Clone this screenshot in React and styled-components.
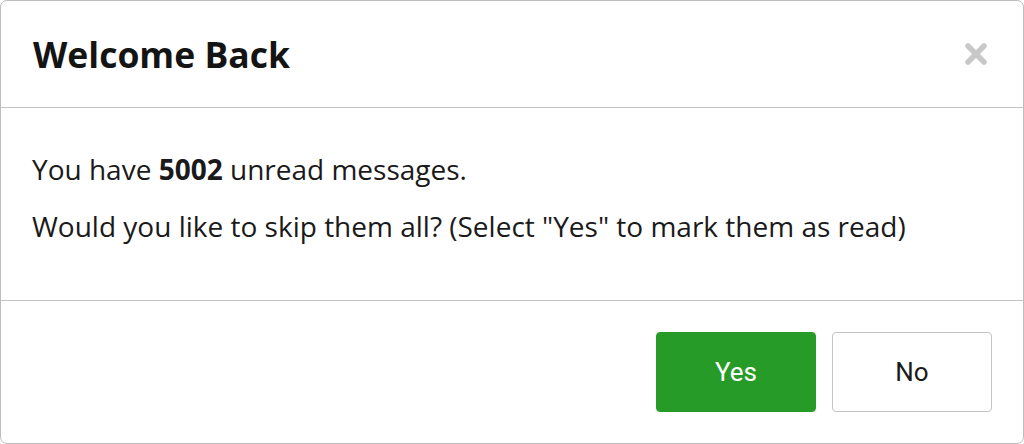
import React from 'react';
import styled, { createGlobalStyle } from 'styled-components';

const GlobalStyle = createGlobalStyle`
  html, body {
    margin: 0;
    padding: 0;
    background: #fff;
  }
  body {
    font-family: "Open Sans", Lato, sans-serif;
    color: #1a1a1a;
  }
`;

const Dialog = styled.div`
  box-sizing: border-box;
  width: 1024px;
  height: 444px;
  border: 1px solid #bdbdbd;
  border-radius: 7px;
  background: #fff;
  display: flex;
  flex-direction: column;
`;

const Header = styled.div`
  height: 106px;
  display: flex;
  align-items: center;
  justify-content: space-between;
  padding: 0 35px 0 32px;
  border-bottom: 1px solid #c4c4c4;
`;

const Title = styled.h2`
  margin: 0;
  font-size: 35.5px;
  font-weight: 700;
  color: #141414;
`;

const CloseButton = styled.button`
  background: none;
  border: none;
  padding: 0;
  cursor: pointer;
  display: flex;
  svg {
    width: 24px;
    height: 24px;
  }
`;

const Body = styled.div`
  box-sizing: border-box;
  height: 193px;
  border-bottom: 1px solid #c4c4c4;
  padding: 41px 31px 0;
  display: flex;
  flex-direction: column;
  gap: 17px;
`;

const Line = styled.p`
  margin: 0;
  font-size: 28px;
  line-height: 40px;
  color: #1a1a1a;
`;

const Footer = styled.div`
  flex: 1;
  display: flex;
  justify-content: flex-end;
  align-items: center;
  gap: 16px;
  padding: 0 31px;
`;

const Button = styled.button`
  box-sizing: border-box;
  width: 160px;
  height: 80px;
  border-radius: 4px;
  font-family: Roboto, "Liberation Sans", sans-serif;
  font-size: 26px;
  cursor: pointer;
  background: ${(p) => (p.$primary ? '#279b28' : '#fff')};
  color: ${(p) => (p.$primary ? '#fff' : '#1a1a1a')};
  border: 1px solid ${(p) => (p.$primary ? '#279b28' : '#c4c4c4')};
`;

export default function App() {
  return (
    <>
      <GlobalStyle />
      <Dialog>
        <Header>
          <Title>Welcome Back</Title>
          <CloseButton type="button" aria-label="Close">
            <svg viewBox="0 0 24 24">
              <path
                d="M4 4 L20 20 M20 4 L4 20"
                stroke="#c8c8c8"
                strokeWidth="5.5"
                strokeLinecap="round"
              />
            </svg>
          </CloseButton>
        </Header>
        <Body>
          <Line>
            You have <b>5002</b> unread messages.
          </Line>
          <Line>Would you like to skip them all? (Select "Yes" to mark them as read)</Line>
        </Body>
        <Footer>
          <Button type="button" $primary>
            Yes
          </Button>
          <Button type="button">No</Button>
        </Footer>
      </Dialog>
    </>
  );
}
